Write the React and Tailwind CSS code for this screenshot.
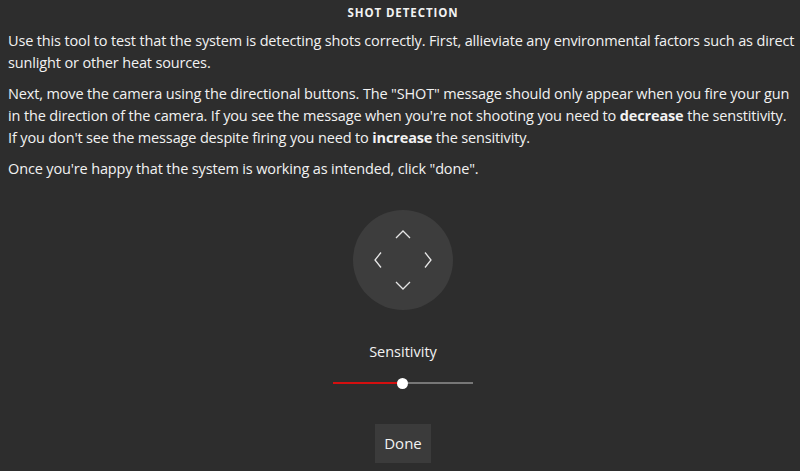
const Chevron = ({ d }) => (
  <svg width="18" height="18" viewBox="0 0 18 18" fill="none" stroke="#e6e6e6" strokeWidth="1.3">
    <path d={d} />
  </svg>
);

export default function App() {
  return (
    <div
      className="w-[800px] h-[471px] bg-[#2d2d2d] text-[#f2f2f2] overflow-hidden"
      style={{ fontFamily: '"Open Sans", "Noto Sans", sans-serif' }}
    >
      <h1 className="pt-[5px] text-center text-[11.5px] font-bold tracking-[0.08em] leading-[16px] pl-[6px]">
        SHOT DETECTION
      </h1>
      <div className="pl-2 pr-[2px] mt-[9px] text-[14.5px] leading-[22px] tracking-[-0.01em] space-y-[9px]">
        <p>
          Use this tool to test that the system is detecting shots correctly. First, allieviate any environmental factors such as direct sunlight or other heat sources.
        </p>
        <p>
          Next, move the camera using the directional buttons. The "SHOT" message should only appear when you fire your gun in the direction of the camera. If you see the message when you're not shooting you need to <b>decrease</b> the senstitivity. If you don't see the message despite firing you need to <b>increase</b> the sensitivity.
        </p>
        <p>Once you're happy that the system is working as intended, click "done".</p>
      </div>
      <div className="flex flex-col items-center">
        <div className="mt-[30px] ml-[6px] w-[100px] h-[100px] rounded-full bg-[#3d3d3d] grid grid-cols-3 grid-rows-3 place-items-center p-[12px]">
          <span />
          <Chevron d="M2 12 L9 5 L16 12" />
          <span />
          <Chevron d="M12 1.5 L6 9 L12 16.5" />
          <span />
          <Chevron d="M6 1.5 L12 9 L6 16.5" />
          <span />
          <Chevron d="M2 6 L9 13 L16 6" />
          <span />
        </div>
        <div className="mt-[32px] ml-[6px] text-[14.5px] leading-[20px]">Sensitivity</div>
        <div className="mt-[15px] ml-[6px] w-[140px] h-[12px] flex items-center relative">
          <div className="w-[70px] h-[2px] bg-[#d40f0f]" />
          <div className="flex-1 h-[2px] bg-[#777777]" />
          <div className="absolute left-[64px] w-[11px] h-[11px] rounded-full bg-white" />
        </div>
        <button className="mt-[35px] ml-[6px] w-[56px] h-[39px] bg-[#3b3b3b] text-[15px] text-[#f2f2f2]">
          Done
        </button>
      </div>
    </div>
  );
}
